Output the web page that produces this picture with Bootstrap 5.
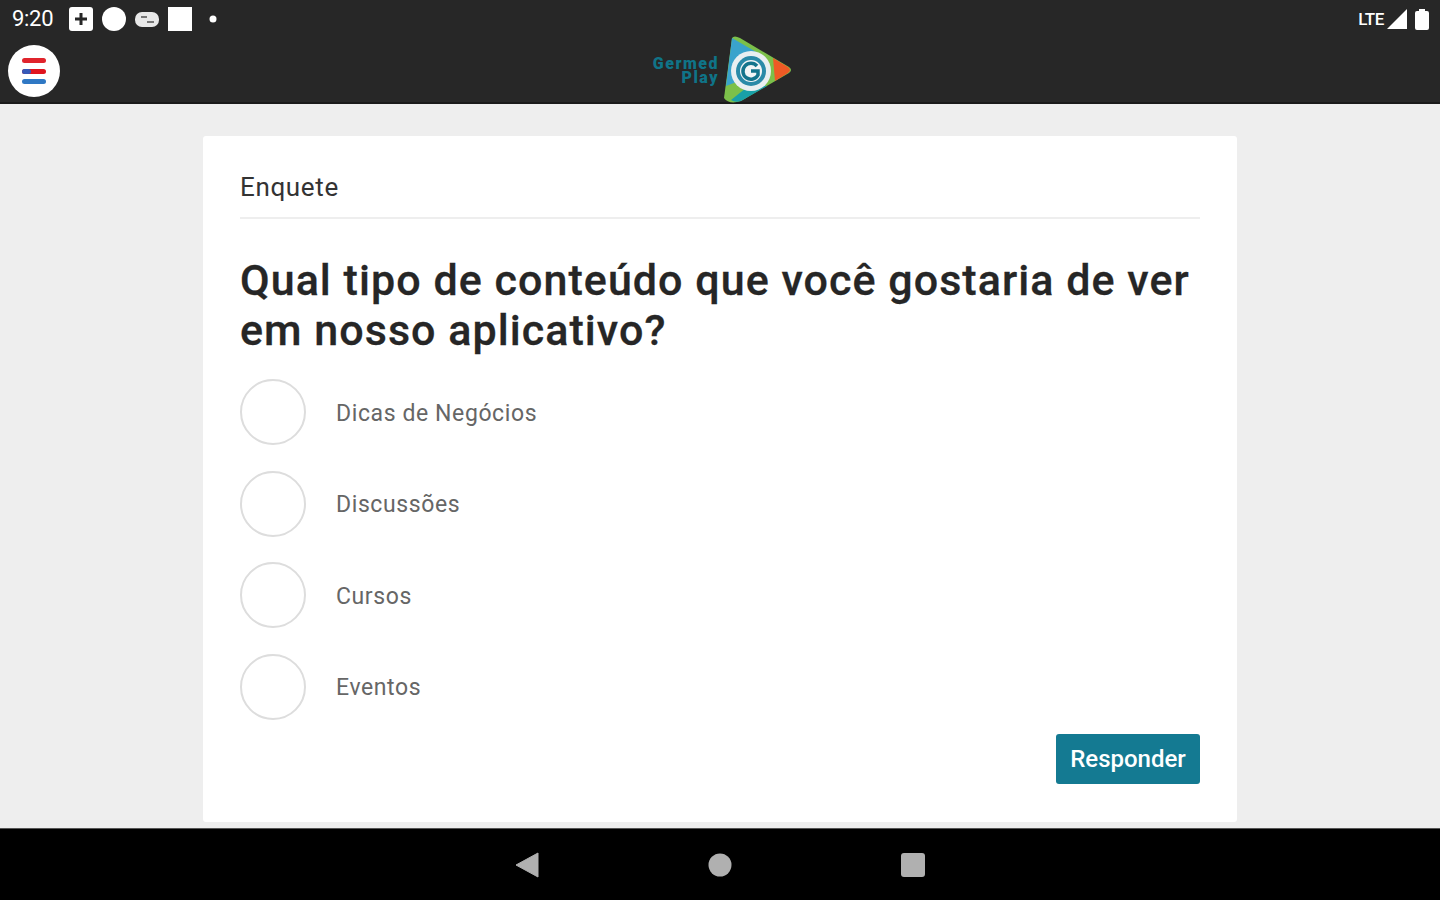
<!DOCTYPE html>
<html lang="pt-BR">
<head>
  <meta charset="UTF-8" />
  <meta name="viewport" content="width=device-width, initial-scale=1" />
  <title>Enquete</title>
  <link href="https://cdn.jsdelivr.net/npm/bootstrap@5.3.0/dist/css/bootstrap.min.css" rel="stylesheet" />
  <style>
    html, body { height: 100%; }
    body { font-family: Roboto, "Liberation Sans", sans-serif; background: #eeeeee; overflow: hidden; }
    .app-shell { height: 900px; }
    .top-area { background: #272727; height: 104px; border-bottom: 2px solid #1a1a1a; flex: none; }
    .status-row { height: 38px; padding: 0 11px 0 12px; color: #fff; }
    .status-time { font-size: 22px; width: 42px; margin-right: 14px; letter-spacing: -.3px; line-height: 1; }
    .status-lte { font-size: 17px; font-weight: 500; letter-spacing: -.4px; line-height: 1; margin-right: 3px; }
    .header-row { height: 64px; padding-left: 8px; }
    .menu-btn { width: 52px; height: 52px; border-radius: 50%; background: #fff; border: 0; padding: 0; margin-top: 7px; }
    .logo-box { left: 650px; top: 34px; width: 144px; height: 70px; }
    .logo-words { color: #0f7488; font-size: 16px; font-weight: 900; line-height: 14px; text-align: right; width: 69px; letter-spacing: 1.5px; margin-top: 23px; white-space: nowrap; }
    .logo-mark { margin-left: 2px; }
    .content-area { flex: 1 1 auto; min-height: 0; }
    .poll-card { width: 1034px; height: 686px; margin: 32px auto 0; padding: 30px 37px 0 37px; border: 0; border-radius: 3px; }
    .poll-label { font-size: 26px; line-height: 42px; color: #333; padding-bottom: 9px; border-bottom: 2px solid #eeeeee; letter-spacing: .65px; }
    .poll-title { font-size: 43px; line-height: 50px; font-weight: 500; letter-spacing: 1.05px; color: #262626; margin: 36px 0 0; -webkit-text-stroke: .3px #262626; }
    .poll-options { margin-top: 24px; gap: 25.5px; }
    .poll-circle { width: 66px; height: 66px; border: 2px solid #ddd; border-radius: 50%; background: #fff; flex: none; }
    .poll-text { font-size: 23px; color: #666; margin: 4px 0 0 30px; letter-spacing: .6px; }
    .answer-btn { background: #147a92; color: #fff; font-size: 24px; font-weight: 500; width: 144px; height: 50px; padding: 0; border: 0; border-radius: 3px; margin-top: 14px; }
    .answer-btn:hover { background: #147a92; color: #fff; }
    .nav-area { height: 72px; background: #000; flex: none; border-top: 1px solid #555; gap: 169px; }
  </style>
</head>
<body>
  <div class="app-shell d-flex flex-column">
    <div class="top-area position-relative">
      <div class="status-row d-flex align-items-center">
        <span class="status-time">9:20</span>
        <svg width="150" height="28" viewBox="0 0 150 28">
          <rect x="1" y="2" width="24" height="24" rx="3" fill="#fff"/>
          <path d="M13 8v12M7 14h12" stroke="#272727" stroke-width="3"/>
          <circle cx="46" cy="14" r="12" fill="#fff"/>
          <rect x="67" y="7" width="24" height="15" rx="7" fill="#e8e8e8"/>
          <path d="M73 12h6M79 17h7" stroke="#777" stroke-width="2"/>
          <rect x="100" y="2" width="24" height="24" fill="#fff"/>
          <circle cx="145" cy="14" r="3.5" fill="#fff"/>
        </svg>
        <div class="ms-auto d-flex align-items-center">
          <span class="status-lte">LTE</span>
          <svg width="20" height="20" viewBox="0 0 20 20"><path d="M0 20 20 0v20z" fill="#fff"/></svg>
          <svg width="14" height="21" viewBox="0 0 14 21" class="ms-2"><path d="M4 0h6v2h2a2 2 0 0 1 2 2v15a2 2 0 0 1-2 2H2a2 2 0 0 1-2-2V4a2 2 0 0 1 2-2h2z" fill="#fff"/></svg>
        </div>
      </div>
      <div class="header-row d-flex align-items-start">
        <button class="menu-btn d-flex align-items-center justify-content-center" type="button" aria-label="Menu">
          <svg width="24" height="28" viewBox="0 0 24 28">
            <rect x="0" y="1" width="24" height="5" rx="2.5" fill="#e0242c"/>
            <rect x="0" y="12" width="24" height="5" rx="2.5" fill="#e0141e"/>
            <rect x="0" y="12" width="9" height="5" rx="2.5" fill="#3659b8"/>
            <rect x="0" y="22" width="24" height="5" rx="2.5" fill="#2f78c4"/>
          </svg>
        </button>
      </div>
      <div class="logo-box position-absolute d-flex">
        <div class="logo-words">Germed<br>Play</div>
        <svg width="70" height="70" viewBox="0 0 70 70" class="logo-mark">
          <path d="M11 4 Q13 1 19 4 L68 33 Q72 36 68 39 L20 67 Q8 71 3 64 Z" fill="#7cc04a"/>
          <path d="M11 4 L42 22 L26 44 L5 52 Z" fill="#3aa3cc"/>
          <path d="M52 24 L67 33 Q71 36 67 39 L54 47 Z" fill="#ee5a25"/>
          <path d="M10 66 L30 50 L46 52 L20 67 Q14 69 10 66 Z" fill="#19a0a8"/>
          <circle cx="30" cy="37" r="20" fill="#e9eff1"/>
          <circle cx="30" cy="37" r="15" fill="#2a8aa8"/>
          <circle cx="30" cy="37" r="11" fill="#f2f5f6"/>
          <path d="M36 32a8 8 0 1 0 1 9v-4h-7" fill="none" stroke="#14748c" stroke-width="3.5"/>
        </svg>
      </div>
    </div>

    <div class="content-area">
      <div class="poll-card card">
        <div class="poll-label">Enquete</div>
        <h1 class="poll-title">Qual tipo de conteúdo que você gostaria de ver<br>em nosso aplicativo?</h1>
        <div class="poll-options d-flex flex-column">
          <div class="d-flex align-items-center"><span class="poll-circle"></span><span class="poll-text">Dicas de Negócios</span></div>
          <div class="d-flex align-items-center"><span class="poll-circle"></span><span class="poll-text">Discussões</span></div>
          <div class="d-flex align-items-center"><span class="poll-circle"></span><span class="poll-text">Cursos</span></div>
          <div class="d-flex align-items-center"><span class="poll-circle"></span><span class="poll-text">Eventos</span></div>
        </div>
        <div class="d-flex justify-content-end">
          <button class="answer-btn btn" type="button">Responder</button>
        </div>
      </div>
    </div>

    <div class="nav-area d-flex align-items-center justify-content-center">
      <svg width="24" height="26" viewBox="0 0 24 26"><path d="M1 13 23 1v24z" fill="#b0b0b0" stroke="#b0b0b0" stroke-linejoin="round"/></svg>
      <svg width="24" height="24" viewBox="0 0 24 24"><circle cx="12" cy="12" r="11.5" fill="#b0b0b0"/></svg>
      <svg width="24" height="24" viewBox="0 0 24 24"><rect width="24" height="24" rx="3" fill="#b0b0b0"/></svg>
    </div>
  </div>
  <script src="https://cdn.jsdelivr.net/npm/bootstrap@5.3.0/dist/js/bootstrap.bundle.min.js"></script>
</body>
</html>
